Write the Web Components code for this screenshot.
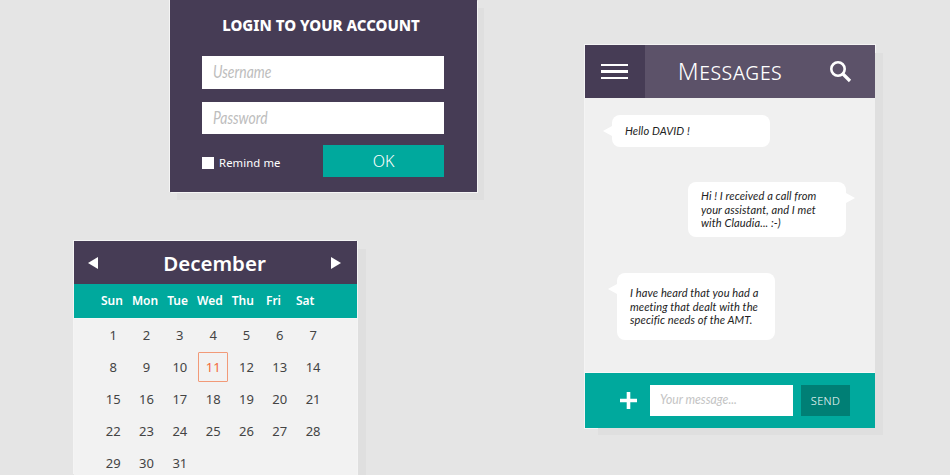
<!DOCTYPE html>
<html>
<head>
<meta charset="utf-8">
<title>UI kit</title>
<style>
    html, body { margin: 0; height: 475px; overflow: hidden; }
    body { background: #e5e5e5; font-family: "Noto Sans", sans-serif; }
    .page { display: flex; align-items: flex-start; height: 475px; }
    .left { display: flex; flex-direction: column; width: 511px; padding-left: 74px; }
    .right { padding-top: 45px; }
</style>
</head>
<body>
<div class="page">
    <div class="left">
        <login-box></login-box>
        <cal-month></cal-month>
    </div>
    <div class="right">
        <chat-box>
            <chat-bubble side="left" style="width:158px;height:32px;margin:17px 0 0 27px">Hello DAVID !</chat-bubble>
            <chat-bubble side="right" style="width:158px;height:55px;margin:35px 0 0 103px">Hi ! I received a call from<br>your assistant, and I met<br>with Claudia... :-)</chat-bubble>
            <chat-bubble side="left" style="width:158px;height:67px;margin:36px 0 0 32px">I have heard that you had a<br>meeting that dealt with the<br>specific needs of the AMT.</chat-bubble>
        </chat-box>
    </div>
</div>

<script>
class LoginBox extends HTMLElement {
    constructor() {
        super();
        this.shadow = this.attachShadow({mode: 'open'});
    }

    connectedCallback() {
        this.shadow.innerHTML = `
            <style>
                :host {
                    display: block;
                    box-sizing: border-box;
                    width: 307px;
                    height: 192px;
                    margin-left: 96px;
                    padding: 16px 33px 0 32px;
                    background: #463c55;
                    box-shadow: 1px 1px 0 #f4f4f4, -1px 0 0 #f4f4f4, 7px 8px 0 #dfdfdf;
                    color: #fff;
                }
                h1 {
                    margin: 0 0 21px;
                    padding-right: 4px;
                    height: 19px;
                    font: 800 15px/19px "Noto Sans", sans-serif;
                    text-align: center;
                }
                .campo {
                    box-sizing: border-box;
                    height: 32.5px;
                    margin-bottom: 13px;
                    padding-left: 11px;
                    background: #fff;
                    color: #bdbdbd;
                    font: italic 17px/32px Lato, sans-serif;
                }
                .campo span { display: block; transform: scaleX(.82); transform-origin: left; }
                .fila { display: flex; align-items: center; margin-top: -2px; }
                .check { width: 12px; height: 12px; margin: 4px 5px 0 0; background: #fff; }
                .fila span { flex: 1; margin-top: 3px; font-size: 11.3px; letter-spacing: .1px; }
                .ok {
                    width: 121px;
                    height: 32px;
                    background: #00a99d;
                    text-align: center;
                    font-size: 16px;
                    font-weight: 300;
                    line-height: 32px;
                }
            </style>
            <h1>LOGIN TO YOUR ACCOUNT</h1>
            <div class="campo"><span>Username</span></div>
            <div class="campo"><span>Password</span></div>
            <div class="fila">
                <div class="check"></div>
                <span>Remind me</span>
                <div class="ok">OK</div>
            </div>
        `;
    }
}

class CalMonth extends HTMLElement {
    constructor() {
        super();
        this.shadow = this.attachShadow({mode: 'open'});
    }

    connectedCallback() {
        const nombres = ['Sun', 'Mon', 'Tue', 'Wed', 'Thu', 'Fri', 'Sat'];
        let dias = '';
        for (let i = 1; i <= 31; i++) {
            dias += `<div class="dia${i === 11 ? ' hoy' : ''}">${i}</div>`;
        }
        this.shadow.innerHTML = `
            <style>
                :host {
                    display: block;
                    position: relative;
                    z-index: 0;
                    width: 283px;
                    height: 234px;
                    margin-top: 49px;
                    background: #f2f2f2;
                    box-shadow: -1px -1px 0 #f4f4f4, 1px 0 0 #f4f4f4, 9px 8px 0 #dfdfdf;
                }
                .cabeza {
                    display: flex;
                    align-items: center;
                    justify-content: space-between;
                    height: 43px;
                    padding: 0 16px 0 14px;
                    background: #463c55;
                    color: #fff;
                    font-size: 20.5px;
                    font-weight: 600;
                }
                svg { display: block; }
                .semana {
                    display: flex;
                    height: 35px;
                    padding: 0 0 2px 27px;
                    gap: 9px;
                    align-items: center;
                    background: #00a99d;
                    color: #fff;
                    font-size: 12px;
                    font-weight: 600;
                    border-bottom: 1px solid #f6f6f6;
                    box-sizing: border-box;
                }
                .semana span:nth-child(6) { margin-left: 3px; }
                .semana span:nth-child(7) { margin-left: 6px; }
                .mes {
                    display: grid;
                    grid-template-columns: repeat(7, 33.33px);
                    grid-auto-rows: 32px;
                    height: 156px;
                    overflow: hidden;
                    padding: 0 0 0 22.5px;
                    color: #444;
                    font-size: 13px;
                }
                .dia { display: flex; align-items: center; justify-content: center; }
                .hoy { position: relative; color: #f26b3a; }
                .hoy::after {
                    content: '';
                    position: absolute;
                    left: 1.5px;
                    top: 1px;
                    width: 28px;
                    height: 28px;
                    border: 1px solid #f29a78;
                    border-radius: 1px;
                }
            </style>
            <div class="cabeza">
                <svg width="10" height="12" viewBox="0 0 10 12"><path d="M10 0V12L0 6Z" fill="#fff"/></svg>
                <span>December</span>
                <svg width="10" height="12" viewBox="0 0 10 12"><path d="M0 0V12L10 6Z" fill="#fff"/></svg>
            </div>
            <div class="semana">${nombres.map(n => `<span>${n}</span>`).join('')}</div>
            <div class="mes">${dias}</div>
        `;
    }
}

class ChatBox extends HTMLElement {
    constructor() {
        super();
        this.shadow = this.attachShadow({mode: 'open'});
    }

    connectedCallback() {
        this.shadow.innerHTML = `
            <style>
                :host {
                    display: flex;
                    flex-direction: column;
                    position: relative;
                    z-index: 0;
                    width: 290px;
                    height: 383px;
                    background: #f0f0f0;
                    box-shadow: 0 0 0 1px #f4f4f4;
                }
                :host::before {
                    content: '';
                    position: absolute;
                    z-index: -1;
                    left: 13px;
                    top: 8px;
                    right: -8px;
                    bottom: -7px;
                    background: #dfdfdf;
                }
                .barra { display: flex; height: 53px; background: #5c5269; color: #fff; }
                .menu {
                    display: flex;
                    flex-direction: column;
                    justify-content: center;
                    gap: 4px;
                    width: 60px;
                    padding-left: 16px;
                    box-sizing: border-box;
                    background: #463c55;
                }
                .menu i { display: block; width: 27px; height: 2.5px; background: #fff; }
                .titulo {
                    flex: 1;
                    padding-right: 14px;
                    text-align: center;
                    font-size: 24px;
                    line-height: 52px;
                    font-variant: small-caps;
                    font-weight: 300;
                    letter-spacing: .55px;
                }
                .lupa { display: flex; align-items: center; padding-right: 23px; }
                .cuerpo { flex: 1; background: #f0f0f0; position: relative; }
                .pie {
                    display: flex;
                    align-items: center;
                    height: 56px;
                    box-sizing: border-box;
                    padding: 0 25px 1px 35px;
                    background: #00a99d;
                    border-top: 1px solid #f8f8f8;
                }
                .mas { width: 17px; height: 17px; margin-right: 13px; flex: none; }
                .texto {
                    box-sizing: border-box;
                    width: 143px;
                    height: 31px;
                    padding-left: 10px;
                    margin-right: 8px;
                    background: #fff;
                    color: #c4c4c4;
                    font: italic 14px/28px Lato, sans-serif;
                }
                .texto span { display: block; transform: scaleX(.87); transform-origin: left; }
                .enviar {
                    width: 49px;
                    height: 31px;
                    background: #007f75;
                    color: #fff;
                    font-size: 11px;
                    font-weight: 300;
                    line-height: 31px;
                    text-align: center;
                    letter-spacing: .4px;
                }
            </style>
            <div class="barra">
                <div class="menu"><i></i><i></i><i></i></div>
                <div class="titulo">Messages</div>
                <div class="lupa">
                    <svg width="23" height="23" viewBox="0 0 23 23" fill="none" stroke="#fff">
                        <circle cx="9" cy="9" r="6.7" stroke-width="2.6"/>
                        <path d="M14 14L21 21" stroke-width="3.2"/>
                    </svg>
                </div>
            </div>
            <div class="cuerpo"><slot></slot></div>
            <div class="pie">
                <svg class="mas" viewBox="0 0 17 17"><path d="M8.5 0V17M0 8.5H17" stroke="#fff" stroke-width="3.6"/></svg>
                <div class="texto"><span>Your message...</span></div>
                <div class="enviar">SEND</div>
            </div>
        `;
    }
}

class ChatBubble extends HTMLElement {
    constructor() {
        super();
        this.shadow = this.attachShadow({mode: 'open'});
    }

    connectedCallback() {
        const lado = this.getAttribute('side') || 'left';
        this.shadow.innerHTML = `
            <style>
                :host {
                    display: flex;
                    align-items: center;
                    position: relative;
                    box-sizing: border-box;
                    padding-left: 13px;
                    background: #fff;
                    border-radius: 8px;
                    color: #222;
                    font: italic 11.1px/13.4px Lato, sans-serif;
                    letter-spacing: .1px;
                }
                .t { display: block; white-space: nowrap; }
                .pico {
                    position: absolute;
                    top: 11px;
                    ${lado === 'left' ? 'left: -9px' : 'right: -9px'};
                    width: 0;
                    height: 0;
                    border-top: 5px solid transparent;
                    border-bottom: 5px solid transparent;
                    ${lado === 'left' ? 'border-right' : 'border-left'}: 9px solid #fff;
                }
            </style>
            <div class="pico"></div>
            <span class="t"><slot></slot></span>
        `;
    }
}

customElements.define('login-box', LoginBox);
customElements.define('cal-month', CalMonth);
customElements.define('chat-box', ChatBox);
customElements.define('chat-bubble', ChatBubble);
</script>
</body>
</html>
